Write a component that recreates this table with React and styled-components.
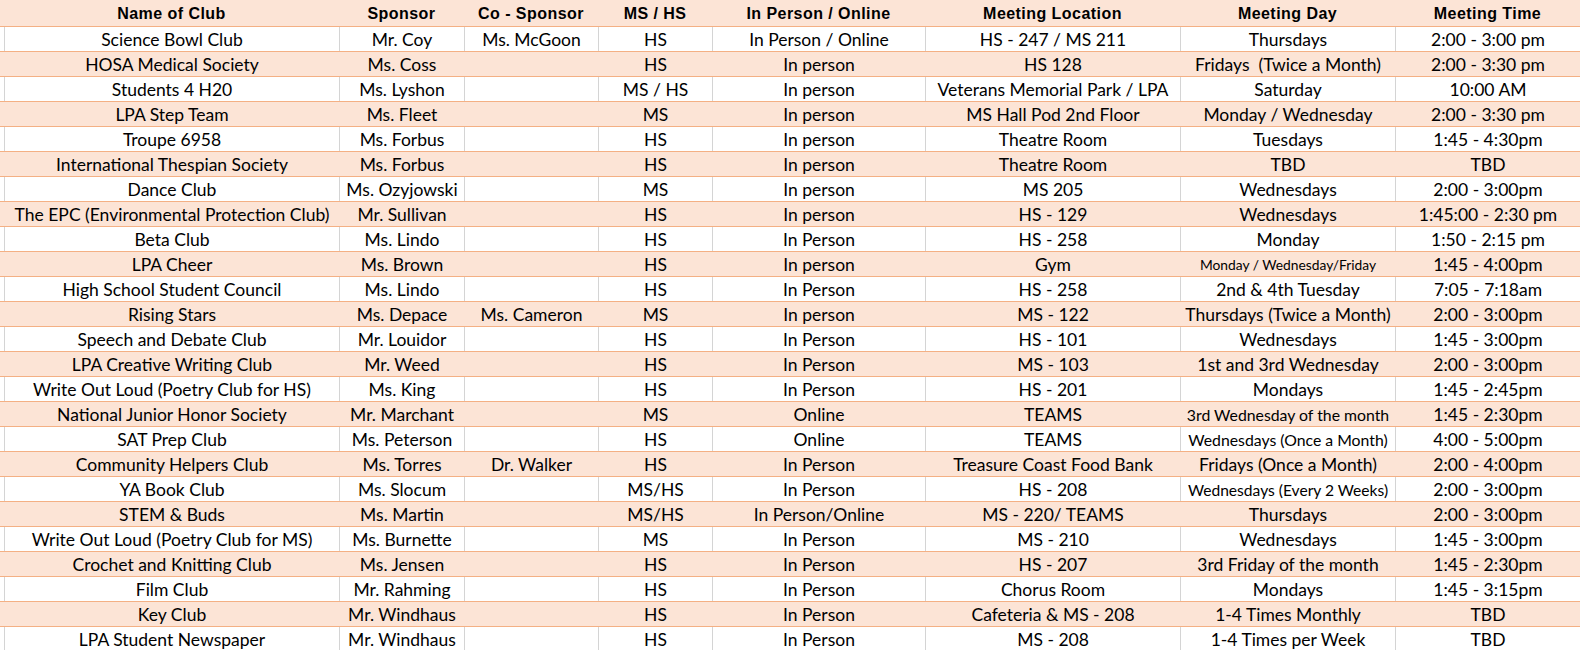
import React from "react";
import styled, { createGlobalStyle } from "styled-components";

const GlobalStyle = createGlobalStyle`
  html, body {
    margin: 0;
    padding: 0;
    background: #ffffff;
    overflow: hidden;
  }
`;

const COLS = "4px 335px 125px 134px 114px 213px 255px 215px 185px";

const Sheet = styled.div`
  width: 1580px;
  height: 650px;
  overflow: hidden;
  display: flex;
  flex-direction: column;
  background: #ffffff;
`;

const Row = styled.div`
  display: grid;
  grid-template-columns: ${COLS};
  flex: none;
  height: ${(p) => (p.$header ? "26px" : "24px")};
  border-bottom: 1px solid #f4b084;
  background: ${(p) => (p.$shade ? "#fce4d6" : "#ffffff")};
`;

const Cell = styled.div`
  box-sizing: border-box;
  border-left: 1px solid ${(p) => (p.$grid ? "#d4d4d4" : "transparent")};
  font-family: Lato, "Noto Sans", sans-serif;
  font-size: ${(p) => p.$size || 17.5}px;
  line-height: 22px;
  padding-top: 2px;
  color: #000000;
  text-align: center;
  white-space: nowrap;
  overflow: hidden;
`;

const HeadCell = styled.div`
  font-family: "Liberation Sans", Arial, sans-serif;
  font-weight: 700;
  font-size: 16px;
  letter-spacing: 0.45px;
  line-height: 22px;
  padding-top: 3px;
  color: #000000;
  text-align: center;
  white-space: nowrap;
  overflow: hidden;
`;

const headers = [
  "",
  "Name of Club",
  "Sponsor",
  "Co - Sponsor",
  "MS / HS",
  "In Person / Online",
  "Meeting Location",
  "Meeting Day",
  "Meeting Time",
];

const rows = [
  ["Science Bowl Club", "Mr. Coy", "Ms. McGoon", "HS", "In Person / Online", "HS - 247 / MS 211", "Thursdays", "2:00 - 3:00 pm"],
  ["HOSA Medical Society", "Ms. Coss", "", "HS", "In person", "HS 128", "Fridays\u00a0 (Twice a Month)", "2:00 - 3:30 pm"],
  ["Students 4 H20", "Ms. Lyshon", "", "MS / HS", "In person", "Veterans Memorial Park / LPA", "Saturday", "10:00 AM"],
  ["LPA Step Team", "Ms. Fleet", "", "MS", "In person", "MS Hall Pod 2nd Floor", "Monday / Wednesday", "2:00 - 3:30 pm"],
  ["Troupe 6958", "Ms. Forbus", "", "HS", "In person", "Theatre Room", "Tuesdays", "1:45 - 4:30pm"],
  ["International Thespian Society", "Ms. Forbus", "", "HS", "In person", "Theatre Room", "TBD", "TBD"],
  ["Dance Club", "Ms. Ozyjowski", "", "MS", "In person", "MS 205", "Wednesdays", "2:00 - 3:00pm"],
  ["The EPC (Environmental Protection Club)", "Mr. Sullivan", "", "HS", "In person", "HS - 129", "Wednesdays", "1:45:00 - 2:30 pm"],
  ["Beta Club", "Ms. Lindo", "", "HS", "In Person", "HS - 258", "Monday", "1:50 - 2:15 pm"],
  ["LPA Cheer", "Ms. Brown", "", "HS", "In person", "Gym", { t: "Monday / Wednesday/Friday", s: 13.8 }, "1:45 - 4:00pm"],
  ["High School Student Council", "Ms. Lindo", "", "HS", "In Person", "HS - 258", "2nd & 4th Tuesday", "7:05 - 7:18am"],
  ["Rising Stars", "Ms. Depace", "Ms. Cameron", "MS", "In person", "MS - 122", "Thursdays (Twice a Month)", "2:00 - 3:00pm"],
  ["Speech and Debate Club", "Mr. Louidor", "", "HS", "In Person", "HS - 101", "Wednesdays", "1:45 - 3:00pm"],
  ["LPA Creative Writing Club", "Mr. Weed", "", "HS", "In Person", "MS - 103", "1st and 3rd Wednesday", "2:00 - 3:00pm"],
  ["Write Out Loud (Poetry Club for HS)", "Ms. King", "", "HS", "In Person", "HS - 201", "Mondays", "1:45 - 2:45pm"],
  ["National Junior Honor Society", "Mr. Marchant", "", "MS", "Online", "TEAMS", { t: "3rd Wednesday of the month", s: 15.8 }, "1:45 - 2:30pm"],
  ["SAT Prep Club", "Ms. Peterson", "", "HS", "Online", "TEAMS", { t: "Wednesdays (Once a Month)", s: 15.8 }, "4:00 - 5:00pm"],
  ["Community Helpers Club", "Ms. Torres", "Dr. Walker", "HS", "In Person", "Treasure Coast Food Bank", "Fridays (Once a Month)", "2:00 - 4:00pm"],
  ["YA Book Club", "Ms. Slocum", "", "MS/HS", "In Person", "HS - 208", { t: "Wednesdays (Every 2 Weeks)", s: 15.6 }, "2:00 - 3:00pm"],
  ["STEM & Buds", "Ms. Martin", "", "MS/HS", "In Person/Online", "MS - 220/ TEAMS", "Thursdays", "2:00 - 3:00pm"],
  ["Write Out Loud (Poetry Club for MS)", "Ms. Burnette", "", "MS", "In Person", "MS - 210", "Wednesdays", "1:45 - 3:00pm"],
  ["Crochet and Knitting Club", "Ms. Jensen", "", "HS", "In Person", "HS - 207", "3rd Friday of the month", "1:45 - 2:30pm"],
  ["Film Club", "Mr. Rahming", "", "HS", "In Person", "Chorus Room", "Mondays", "1:45 - 3:15pm"],
  ["Key Club", "Mr. Windhaus", "", "HS", "In Person", "Cafeteria & MS - 208", "1-4 Times Monthly", "TBD"],
  ["LPA Student Newspaper", "Mr. Windhaus", "", "HS", "In Person", "MS - 208", "1-4 Times per Week", "TBD"],
];

export default function App() {
  return (
    <>
      <GlobalStyle />
      <Sheet>
        <Row $header $shade>
          {headers.map((h, i) => (
            <HeadCell key={i}>{h}</HeadCell>
          ))}
        </Row>
        {rows.map((r, ri) => {
          const shade = ri % 2 === 1;
          return (
            <Row key={ri} $shade={shade}>
              <Cell $grid={false} />
              {r.map((c, ci) => {
                const text = typeof c === "string" ? c : c.t;
                const size = typeof c === "string" ? undefined : c.s;
                return (
                  <Cell key={ci} $grid={!shade} $size={size}>
                    {text}
                  </Cell>
                );
              })}
            </Row>
          );
        })}
      </Sheet>
    </>
  );
}
